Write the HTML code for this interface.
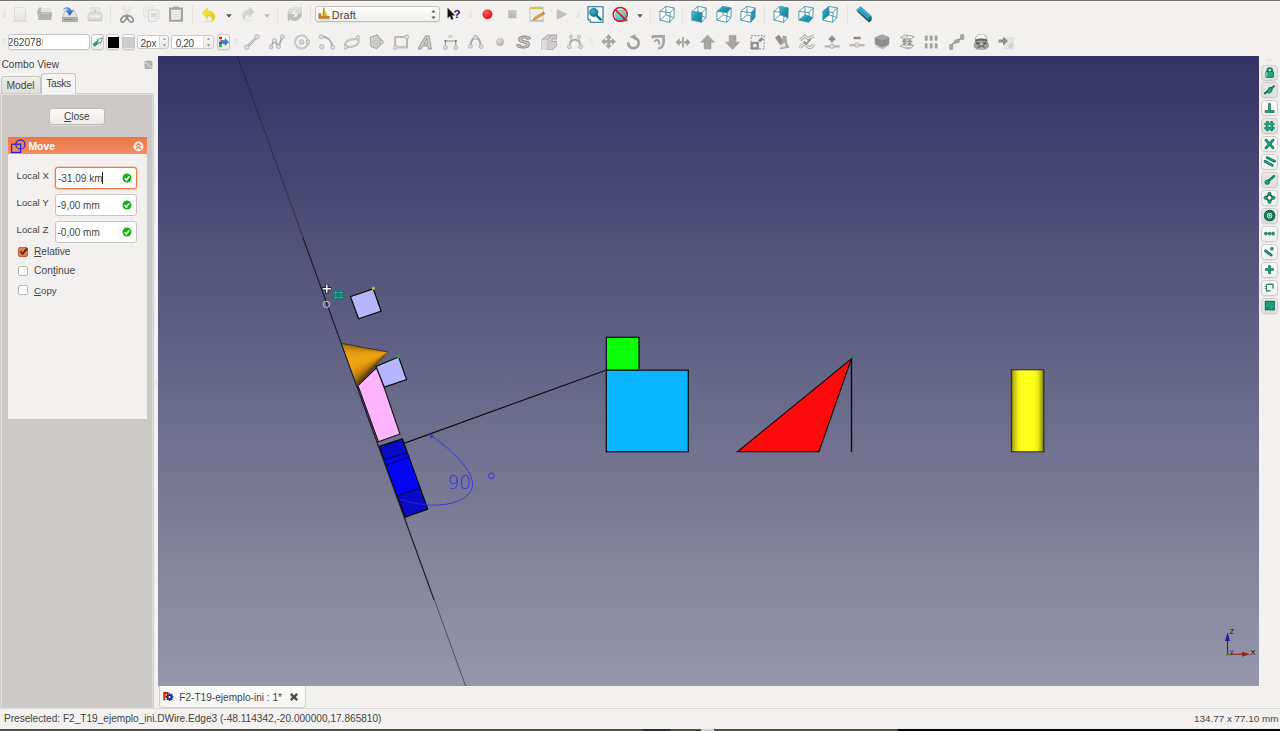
<!DOCTYPE html>
<html><head><meta charset="utf-8"><title>FreeCAD</title>
<style>
*{box-sizing:border-box;margin:0;padding:0}
html,body{width:1280px;height:731px;overflow:hidden;background:#f2f1f0;font-family:"Liberation Sans","DejaVu Sans",sans-serif;font-size:10px;color:#45443f}
.abs{position:absolute}
#top{position:absolute;left:0;top:0;width:1280px;height:2px;background:linear-gradient(#72716d 0,#72716d 50%,#f9f9f8 50%)}
#bottom{position:absolute;left:0;top:729px;width:1280px;height:2px;background:linear-gradient(90deg,#4d4c45 0,#4d4c45 643px,#2b2b28 643px,#2b2b28 670px,#4d4c45 670px,#4d4c45 701px,#cfceca 701px,#cfceca 714px,#4d4c45 714px,#4d4c45 898px,#050505 898px)}
#view{position:absolute;left:158px;top:56px;width:1101px;height:630px;background:linear-gradient(#333365,#9797aa)}
#view svg{position:absolute;left:0;top:0}
/* left panel */
#combo-title{position:absolute;left:1.5px;top:59.1px;font-size:10.2px;line-height:12px;color:#45443f}
#tabpane{position:absolute;left:0;top:93px;width:154px;height:615px;background:linear-gradient(#cbc8c5,#cbcac8);border:1px solid #cfcecb;border-radius:0 3px 0 0;box-shadow:inset 1px 1px 0 #e4e3e1,inset -1px 0 0 #dddcda}
.tab{position:absolute;font-size:10.3px;text-align:center;border:1px solid #c4c3c0;border-bottom:none;border-radius:3px 3px 0 0}
#statusline{position:absolute;left:0;top:708px;width:1280px;height:1px;background:#dad9d6}
#status{position:absolute;left:4px;top:713.3px;font-size:10.1px;line-height:12px}
#dims{position:absolute;right:1.5px;top:713.1px;font-size:9.9px;line-height:12px}

.btn{border:1px solid #bcbbb8;border-radius:3px;background:linear-gradient(#fbfbfa,#eceae8);font-size:10px;box-shadow:0 1px 0 #dcdbd8}
.lbl{font-size:9.7px;line-height:13px;color:#45443f}
.inp{width:82px;height:22px;border:1px solid #c6c5c2;border-radius:3px;background:#fff;font-size:10px;line-height:22px;padding-left:2px;color:#45443f}
.caret{display:inline-block;width:1px;height:12px;background:#222;vertical-align:-2px}
.cb{width:10px;height:10px;border:1px solid #b5b4b0;border-radius:2px;background:#fff}
</style></head><body>
<div id="top"></div>
<div id="view">
<svg width="1101" height="630" viewBox="158 56 1101 630">
<defs>
<linearGradient id="cone" x1="343" y1="341" x2="359" y2="388" gradientUnits="userSpaceOnUse">
<stop offset="0" stop-color="#b87e10"/><stop offset="0.3" stop-color="#e89c12"/><stop offset="0.5" stop-color="#f2a414"/><stop offset="0.72" stop-color="#c8860e"/><stop offset="1" stop-color="#4a3006"/>
</linearGradient>
<linearGradient id="cyl" x1="0" y1="0" x2="1" y2="0">
<stop offset="0" stop-color="#77770f"/><stop offset="0.07" stop-color="#b8b812"/><stop offset="0.2" stop-color="#eeee18"/><stop offset="0.32" stop-color="#ffff1c"/><stop offset="0.68" stop-color="#ffff1c"/><stop offset="0.82" stop-color="#eaea18"/><stop offset="0.93" stop-color="#adad12"/><stop offset="1" stop-color="#62620e"/>
</linearGradient>
</defs>
<!-- long construction line -->
<line x1="237.3" y1="56" x2="465.6" y2="686" stroke="#1a1a28" stroke-width="0.55"/>
<!-- line to green square -->
<line x1="404" y1="443.300" x2="606.500" y2="370" stroke="#101016" stroke-width="1.250"/>
<!-- upper small square -->
<polygon points="373.2,288.8 350.4,296.6 358.6,318.8 381.2,311.2" fill="#b6b6ff" stroke="#111" stroke-width="1.3"/>
<circle cx="373.4" cy="288.4" r="1.6" fill="#c8c81e"/>
<!-- pink -->
<polygon points="377.2,367 358,385.6 378.4,441.8 400,434" fill="#ffb4ff" stroke="#15151c" stroke-width="1.1"/>
<!-- second small square -->
<polygon points="398.7,357 375.9,366.3 384.3,387.2 406.6,379.6" fill="#b6b6ff" stroke="#111" stroke-width="1.3"/>
<circle cx="398.7" cy="356.7" r="1.6" fill="#1fae1f"/>
<!-- cone -->
<g><polygon points="341.80,343.30 387.7,352 343.37,347.61" fill="#9e6c0e"/><polygon points="342.59,345.45 387.7,352 344.16,349.76" fill="#b97f10"/><polygon points="343.37,347.61 387.7,352 344.94,351.92" fill="#c88911"/><polygon points="344.16,349.76 387.7,352 345.73,354.07" fill="#d89312"/><polygon points="344.94,351.92 387.7,352 346.51,356.23" fill="#e29a12"/><polygon points="345.73,354.07 387.7,352 347.30,358.38" fill="#e79d13"/><polygon points="346.51,356.23 387.7,352 348.08,360.54" fill="#eba013"/><polygon points="347.30,358.38 387.7,352 348.87,362.69" fill="#f0a314"/><polygon points="348.08,360.54 387.7,352 349.65,364.85" fill="#f1a414"/><polygon points="348.87,362.69 387.7,352 350.44,367.00" fill="#efa313"/><polygon points="349.65,364.85 387.7,352 351.22,369.16" fill="#eda213"/><polygon points="350.44,367.00 387.7,352 352.00,371.31" fill="#eba112"/><polygon points="351.22,369.16 387.7,352 352.79,373.47" fill="#e59c11"/><polygon points="352.00,371.31 387.7,352 353.57,375.62" fill="#db9410"/><polygon points="352.79,373.47 387.7,352 354.36,377.78" fill="#d18c0f"/><polygon points="353.57,375.62 387.7,352 355.14,379.94" fill="#c2810d"/><polygon points="354.36,377.78 387.7,352 355.93,382.09" fill="#ad730b"/><polygon points="355.14,379.94 387.7,352 356.71,384.25" fill="#986508"/><polygon points="355.93,382.09 387.7,352 357.50,386.40" fill="#795007"/><polygon points="356.71,384.25 387.7,352 357.50,386.40" fill="#5a3b06"/></g>
<line x1="341.8" y1="343.3" x2="387.7" y2="352" stroke="#2a1e08" stroke-width="0.7"/>
<!-- blue box -->
<polygon points="379.3,446.5 402.3,438.9 427.7,509.2 405.1,517.2" fill="#0a0ac8" stroke="#0a0a14" stroke-width="1.4"/>
<polygon points="384.4,460 407,452.7 419.5,488 397.5,495.8" fill="#0404f8"/>
<line x1="384.4" y1="460" x2="407" y2="452.7" stroke="#0a0a50" stroke-width="1.3"/>
<line x1="386" y1="465" x2="408.4" y2="457.5" stroke="#0a0a50" stroke-width="1.3"/>
<line x1="397.5" y1="495.8" x2="419.5" y2="488" stroke="#0a0a50" stroke-width="1.3"/>
<line x1="303" y1="238" x2="434" y2="600" stroke="#1a1a26" stroke-width="1"/>
<!-- arc -->
<path d="M430,435 C455,452 474,472 472.5,486 C470,502 440,512 400.5,499.5" fill="none" stroke="#2c2ce4" stroke-width="0.800"/>
<polygon points="429.300,434.300 433.500,435.600 431.300,438.600" fill="#2c2ce4"/>
<text x="447.500" y="488.700" font-family="'DejaVu Sans','Liberation Sans',sans-serif" font-weight="200" font-size="19.500" fill="#3030e0" textLength="23.400" lengthAdjust="spacingAndGlyphs">90</text>
<circle cx="491.300" cy="475.700" r="2.800" fill="none" stroke="#2c2ce4" stroke-width="1"/>
<!-- green, cyan squares -->
<rect x="606.3" y="337.3" width="32.7" height="33" fill="#0bff0b" stroke="#10141a" stroke-width="1.3"/>
<rect x="606.3" y="370.2" width="82" height="81.5" fill="#0bb4ff" stroke="#10141a" stroke-width="1.3"/>
<!-- red triangle -->
<polygon points="737.5,451.7 851.4,358.7 819,451.7" fill="#fa0c0c" stroke="#1a1014" stroke-width="1.2"/>
<line x1="851.5" y1="358.7" x2="851.5" y2="452" stroke="#0d0d12" stroke-width="1.4"/>
<!-- cylinder -->
<rect x="1011.3" y="369.8" width="32.6" height="82" fill="url(#cyl)" stroke="#22222a" stroke-width="1"/>
<!-- cursor & snap -->
<g>
<path d="M326.8,284 v9.4 M322.1,288.7 h9.4" stroke="#222" stroke-width="3.2" fill="none"/>
<path d="M326.8,284.6 v8.2 M322.7,288.7 h8.2" stroke="#fff" stroke-width="1.4" fill="none"/>
<circle cx="326.5" cy="304.4" r="3.1" fill="none" stroke="#e4e4ec" stroke-width="0.85"/>
<path d="M335.8,291 v8 M340.8,291 v8 M333.6,292.6 h9.4 M333.6,297.4 h9.4" stroke="#0f6a50" stroke-width="2.6" fill="none" stroke-linecap="round"/>
<path d="M335.8,291 v8 M340.8,291 v8 M333.6,292.6 h9.4 M333.6,297.4 h9.4" stroke="#16b08a" stroke-width="1.3" fill="none" stroke-linecap="round"/>
</g>
<!-- axis cross -->
<g>
<line x1="1227.5" y1="654.3" x2="1227.5" y2="640" stroke="#2a2a9a" stroke-width="1.2"/>
<polygon points="1227.5,632 1225,641 1230,641" fill="#1f1f9c"/>
<line x1="1227.5" y1="654.3" x2="1243" y2="654.3" stroke="#9a2a2a" stroke-width="1.2"/>
<polygon points="1250,654.3 1242,651.8 1242,656.8" fill="#a02020"/>
<circle cx="1227.5" cy="654.6" r="1.3" fill="#1fa01f"/>
<text x="1229.4" y="633.6" font-family="'Liberation Sans',sans-serif" font-size="7.5" fill="#111">Z</text>
<text x="1250.5" y="655" font-family="'Liberation Sans',sans-serif" font-size="7.5" fill="#111">X</text>
<text x="1229.4" y="655" font-family="'Liberation Sans',sans-serif" font-size="6.5" fill="#222">Y</text>
</g>
</svg>
</div>
<!--TB0--><svg class="abs" style="left:3px;top:11px" width="5" height="8" viewBox="0 0 5 8"><path d="M0.200,1.500h2.800M0.200,3.600h2.800M0.200,5.700h2.800" stroke="#d9d8d5" stroke-width="0.800"/></svg>
<svg class="abs" style="left:12px;top:6px" width="16" height="16" viewBox="0 0 16 16"><defs><linearGradient id="gnew" x1="0" y1="0" x2="0" y2="1"><stop offset="0" stop-color="#f4f4f3"/><stop offset="1" stop-color="#e4e3e2"/></linearGradient></defs><path d="M2.5,1.5 h8.5 l2.5,2.5 v11 h-11 z" fill="url(#gnew)" stroke="#dad9d7" stroke-width="0.9"/><path d="M11,1.5 v2.5 h2.5" fill="#fafafa" stroke="#e2e1df" stroke-width="0.6"/><path d="M1.5,15.6 h13" stroke="#d9d8d6" stroke-width="0.8"/></svg>
<svg class="abs" style="left:37px;top:6px" width="16" height="16" viewBox="0 0 16 16"><path d="M1,3 l1,-1.6 h3 l1,1.2 h7.5 v6 h-13.5z" fill="#bdbcba"/><path d="M4,2.2 h9.5 v5 h-9.5z" fill="#e4e3e1"/><path d="M1.2,14 l-0.4,-9.5 h2 l0.6,1.8 h12 l-1.2,7.7 z" fill="#b2b1af"/><path d="M1.6,13.4 l1.4,-6 h12" fill="none" stroke="#c9c8c6" stroke-width="0.7"/></svg>
<svg class="abs" style="left:62px;top:6px" width="16" height="16" viewBox="0 0 16 16"><defs><linearGradient id="gsv" x1="0" y1="0" x2="1" y2="1"><stop offset="0" stop-color="#9dbde2"/><stop offset="0.5" stop-color="#4a84c8"/><stop offset="1" stop-color="#2559a4"/></linearGradient></defs><path d="M0.400,11.400 l2.600,-7 h9.600 l2.600,7 v4.200 h-14.800z" fill="#e5e4e2" stroke="#b1b0ae" stroke-width="0.700"/><rect x="0.400" y="11.400" width="14.800" height="4.200" fill="#bab9b7" stroke="#a09f9d" stroke-width="0.700"/><path d="M2,13.500 h11.600" stroke="#8a8987" stroke-width="1.300"/><path d="M10.600,13.500 h3" stroke="#a9a8a6" stroke-width="1.300"/><path d="M0.800,4.600 c0.400,-3.400 4.200,-4.800 7,-2.600 c1.100,0.900 1.500,2 1.600,2.600 h2.400 l-4.100,5.400 l-4.300,-5.400 h2.400 c-0.300,-1.800 -2.400,-2.400 -5,0z" fill="url(#gsv)"/></svg>
<svg class="abs" style="left:87px;top:6px" width="16" height="16" viewBox="0 0 16 16"><rect x="3.5" y="1.5" width="9" height="6" fill="#e9e8e6" stroke="#d6d5d3" stroke-width="0.7"/><path d="M8,2.5 v3.4 M6.6,4.6 l1.4,1.5 l1.4,-1.5" stroke="#cbcac8" stroke-width="1" fill="none"/><path d="M1,8 l1.5,-1.5 h11 l1.5,1.5 v6.3 h-14z" fill="#dddcda" stroke="#cccbc9" stroke-width="0.7"/><rect x="2.2" y="9.2" width="11.6" height="2.2" fill="#f0efee"/><path d="M1,14.7 h14" stroke="#c4c3c1" stroke-width="1"/></svg>
<div class="abs" style="left:110px;top:5px;width:1px;height:18px;background:#e4e3e0"></div>
<svg class="abs" style="left:119px;top:6px" width="16" height="17" viewBox="0 0 16 17"><path d="M3.8,0.8 l5.600,10 M12.200,0.800 l-5.600,10" stroke="#d9d8d6" stroke-width="2.2" fill="none"/><path d="M3.8,0.800 l5.600,10 M12.200,0.800 l-5.600,10" stroke="#f4f3f2" stroke-width="0.9" fill="none"/><ellipse cx="4.600" cy="13" rx="3.500" ry="2.100" transform="rotate(-48 4.600 13)" fill="none" stroke="#8c8b89" stroke-width="1.500"/><ellipse cx="11.400" cy="13" rx="3.500" ry="2.100" transform="rotate(48 11.400 13)" fill="none" stroke="#8c8b89" stroke-width="1.500"/><circle cx="8" cy="9" r="1" fill="#8c8b89"/></svg>
<svg class="abs" style="left:143px;top:6px" width="17" height="16" viewBox="0 0 17 16"><rect x="0.8" y="0.8" width="9.5" height="10.5" fill="#ecebea" stroke="#dfdedc" stroke-width="0.7"/><path d="M5.5,4 h10.3 v8.5 l-3,3 h-7.3z" fill="#eeedec" stroke="#d3d2d0" stroke-width="0.8"/><rect x="8" y="7" width="5.5" height="4" fill="#d8d7d5"/><path d="M12.8,15.5 v-3 h3" fill="#f8f8f7" stroke="#d3d2d0" stroke-width="0.6"/></svg>
<svg class="abs" style="left:168px;top:6px" width="16" height="16" viewBox="0 0 16 16"><rect x="1.6" y="2" width="12.8" height="13.2" fill="#a9a8a6" stroke="#979694" stroke-width="0.8"/><rect x="3.3" y="3.6" width="9.4" height="10.2" fill="#ecebea"/><rect x="5.4" y="0.8" width="5.2" height="2.6" rx="0.8" fill="#b4b3b1" stroke="#979694" stroke-width="0.6"/><path d="M5,6.5 h6 M5,8.5 h6 M5,10.5 h4" stroke="#d9d8d6" stroke-width="0.9"/><path d="M12.7,11.4 l-2.4,2.4 h2.4z" fill="#c2c1bf"/></svg>
<div class="abs" style="left:192px;top:5px;width:1px;height:18px;background:#e4e3e0"></div>
<svg class="abs" style="left:201.4px;top:6.6px" width="16" height="16" viewBox="0 0 16 16"><defs><linearGradient id="gun" x1="0" y1="0" x2="1" y2="1"><stop offset="0" stop-color="#f6ec6a"/><stop offset="0.6" stop-color="#e9d414"/><stop offset="1" stop-color="#d6be0a"/></linearGradient></defs><ellipse cx="8" cy="14.3" rx="6" ry="1.3" fill="#e3e2df"/><path d="M1.2,5.6 l5.2,-4.8 v3 c4.5,0 7.6,2.4 7.6,6 c0,2.2 -1.8,3.9 -3.8,4.6 c1.2,-1.3 1.5,-2.6 0.6,-3.8 c-0.9,-1.2 -2.4,-1.6 -4.4,-1.5 v3z" fill="url(#gun)" stroke="#e0cc2a" stroke-width="0.5"/></svg>
<svg class="abs" style="left:225.8px;top:13.5px" width="6" height="4" viewBox="0 0 6 4"><path d="M0.2,0.3 h5.6 l-2.8,3.400 z" fill="#55544f"/></svg>
<svg class="abs" style="left:241px;top:6px" width="15" height="16" viewBox="0 0 15 16"><ellipse cx="7" cy="14.200" rx="5.600" ry="1.200" fill="#eae9e7"/><path d="M13.300,5.800 l-5.200,-5 v3.200 c-4,0.200 -6.800,2.600 -6.800,5.800 c0,2 1.400,3.400 3,4 c-0.800,-1.200 -0.800,-2.600 0,-3.600 c0.800,-1 2.200,-1.400 3.800,-1.400 v2.800z" fill="#d6d5d3" stroke="#d0cfcd" stroke-width="0.400"/><path d="M8.400,1.600 l4,4 l-4,4.400" fill="#cbcac8" opacity="0.600"/></svg>
<svg class="abs" style="left:264.4px;top:13.5px" width="6" height="4" viewBox="0 0 6 4"><path d="M0.2,0.3 h5.6 l-2.8,3.400 z" fill="#bab9b6"/></svg>
<div class="abs" style="left:277px;top:5px;width:1px;height:18px;background:#e4e3e0"></div>
<svg class="abs" style="left:286.5px;top:5.4px" width="16" height="17" viewBox="0 0 16 17"><path d="M0.800,8.400 A7,7 0 0 1 12.200,3.200 L14.300,1.200 L14.700,8 L8,7.600 L9.900,5.600 A3.300,3.300 0 0 0 4.600,8.400 Z" fill="#dad9d7" stroke="#c4c3c1" stroke-width="0.500"/><path d="M0.800,8.400 A7,7 0 0 1 12.200,3.200 L14.300,1.200 L14.700,8 L8,7.600 L9.900,5.600 A3.300,3.300 0 0 0 4.600,8.400 Z" transform="rotate(180 7.750 8.600)" fill="#bfbebc" stroke="#b3b2b0" stroke-width="0.500"/><path d="M2.200,6.400 A6,6 0 0 1 11,3.600" stroke="#f0efee" stroke-width="1" fill="none"/></svg>
<div class="abs" style="left:310px;top:5px;width:1px;height:18px;background:#e4e3e0"></div>
<div class="abs" style="left:315px;top:6px;width:125px;height:16px;border:1px solid #c1c0bd;border-radius:3px;background:linear-gradient(#fdfdfc,#efeeec);box-shadow:0 1px 0 #e4e3e0"></div>
<svg class="abs" style="left:318px;top:7px" width="12" height="14" viewBox="0 0 12 14"><path d="M6,0.8 l3.4,8 h-3.4z" fill="#cfc23a"/><path d="M6,0.8 l-2.6,8 h2.6z" fill="#e4d860"/><path d="M5.6,0.5 v9" stroke="#6b5a1a" stroke-width="0.6"/><path d="M0.8,6.6 h1.8 v2.6 h8.6 v2.2 h-10.4z" fill="#d98712" stroke="#9a5c08" stroke-width="0.5"/><path d="M1.6,13 h9.6" stroke="#c4c3c0" stroke-width="0.8"/></svg>
<div class="abs" style="left:331.800px;top:7.700px;font-size:10.800px;letter-spacing:0.150px;line-height:14px;color:#45443f">Draft</div>
<svg class="abs" style="left:431px;top:9px" width="5" height="11" viewBox="0 0 5 11"><path d="M0.4,3.6 l2.1,-2.6 l2.1,2.6z M0.4,7.4 l2.1,2.6 l2.1,-2.6z" fill="#5a5956"/></svg>
<svg class="abs" style="left:447px;top:7px" width="13" height="14" viewBox="0 0 13 14"><path d="M0.8,1.2 v9.6 l2.2,-2 l1.5,3.6 l1.6,-0.7 l-1.5,-3.5 h3z" fill="#111" stroke="#000" stroke-width="0.4"/><text x="6.6" y="10.6" font-family="Liberation Sans,sans-serif" font-weight="bold" font-size="11.5" fill="#12128a">?</text></svg>
<svg class="abs" style="left:469px;top:11px" width="5" height="8" viewBox="0 0 5 8"><path d="M0.200,1.500h2.800M0.200,3.600h2.800M0.200,5.700h2.800" stroke="#d9d8d5" stroke-width="0.800"/></svg>
<svg class="abs" style="left:482px;top:9px" width="11" height="11" viewBox="0 0 11 11"><defs><radialGradient id="grec" cx="0.4" cy="0.35" r="0.7"><stop offset="0" stop-color="#ff5a5a"/><stop offset="1" stop-color="#e00a16"/></radialGradient></defs><circle cx="5.5" cy="5.3" r="4.9" fill="url(#grec)"/></svg>
<svg class="abs" style="left:508px;top:10px" width="9" height="9" viewBox="0 0 9 9"><rect x="0.3" y="0.3" width="8" height="8" fill="#bbbab8"/><rect x="0.3" y="0.3" width="8" height="3.4" fill="#c6c5c3"/></svg>
<svg class="abs" style="left:529px;top:6px" width="17" height="16" viewBox="0 0 17 16"><rect x="1" y="1.2" width="13" height="13" fill="#f4f3f1" stroke="#b9b8b5" stroke-width="0.8"/><rect x="1" y="1" width="13" height="2.2" fill="#d9c15a"/><path d="M0.5,15 h14.5" stroke="#b5b4b1" stroke-width="1.2"/><path d="M3,6 h8 M3,8.5 h6" stroke="#dcdbd8" stroke-width="0.7"/><path d="M5.2,11.6 l8.6,-5 l1.2,1.8 l-8.6,5 l-2.3,0.4z" fill="#e8a63a" stroke="#a8651a" stroke-width="0.5"/><path d="M13.8,6.6 l1.2,1.8 l1,-0.7 l-1.1,-1.7z" fill="#d65a5a"/></svg>
<svg class="abs" style="left:556px;top:9px" width="12" height="11" viewBox="0 0 12 11"><path d="M1,0.6 l10,4.7 l-10,4.9z" fill="#c3c2c0" stroke="#b3b2b0" stroke-width="0.5"/></svg>
<svg class="abs" style="left:577px;top:11px" width="5" height="8" viewBox="0 0 5 8"><path d="M0.200,1.500h2.800M0.200,3.600h2.800M0.200,5.700h2.800" stroke="#d9d8d5" stroke-width="0.800"/></svg>
<svg class="abs" style="left:587px;top:6px" width="17" height="17" viewBox="0 0 17 17"><path d="M1,0.8 h15 v15.4 h-12.4 l-2.6,-2.6z" fill="#fdfdfd" stroke="#1a6e86" stroke-width="1.1"/><path d="M1,13.6 h2.6 v2.6" fill="#e8eef0" stroke="#1a6e86" stroke-width="0.7"/><defs><radialGradient id="gzm" cx="0.4" cy="0.35" r="0.7"><stop offset="0" stop-color="#3fb0cc"/><stop offset="1" stop-color="#0f6f90"/></radialGradient></defs><circle cx="6.8" cy="6.4" r="4.2" fill="url(#gzm)" stroke="#0d5c78" stroke-width="0.6"/><path d="M9.8,9.6 l4,4" stroke="#0f6f90" stroke-width="2.4" stroke-linecap="round"/></svg>
<svg class="abs" style="left:612px;top:6px" width="17" height="17" viewBox="0 0 17 17"><defs><radialGradient id="gds" cx="0.4" cy="0.35" r="0.7"><stop offset="0" stop-color="#8fe6ea"/><stop offset="1" stop-color="#2fb4c4"/></radialGradient></defs><ellipse cx="11" cy="14.2" rx="5" ry="1.4" fill="#55534f" opacity="0.7"/><circle cx="8.6" cy="9" r="5.6" fill="url(#gds)"/><path d="M13.6,2.2 l-5.5,6.2" stroke="#e6b13a" stroke-width="1.6"/><circle cx="8.2" cy="8.4" r="7" fill="none" stroke="#d4141e" stroke-width="1.5"/><path d="M3.2,3.6 l10,9.8" stroke="#d4141e" stroke-width="1.5"/></svg>
<svg class="abs" style="left:637px;top:13.5px" width="6" height="4" viewBox="0 0 6 4"><path d="M0.2,0.3 h5.6 l-2.8,3.400 z" fill="#5a5955"/></svg>
<div class="abs" style="left:650px;top:5px;width:1px;height:18px;background:#e4e3e0"></div>
<svg class="abs" width="0" height="0"><defs><linearGradient id="gcube" x1="0" y1="0" x2="1" y2="1"><stop offset="0" stop-color="#4cc0e0"/><stop offset="0.5" stop-color="#1c93b2"/><stop offset="1" stop-color="#11809e"/></linearGradient></defs></svg>
<svg class="abs" style="left:658.5px;top:2px" width="17" height="22" viewBox="0 0 17 22"><polygon points="6.8,4.4 15.2,5.9 14.9,15.6 10.6,20.3 0.9,18.1 0.9,9.4" fill="#fbfcfc"/><path d="M0.9,9.4 L11.2,10.6 L10.6,20.3 L0.9,18.1z M6.8,4.4 L15.2,5.9 L14.9,15.6 L7.1,12.8z M0.9,9.4 L6.8,4.4 M11.2,10.6 L15.2,5.9 M10.6,20.3 L14.9,15.6 M0.9,18.1 L7.1,12.8" fill="none" stroke="#3a8ea2" stroke-width="0.85" stroke-linejoin="round"/></svg>
<div class="abs" style="left:682px;top:5px;width:1px;height:18px;background:#e4e3e0"></div>
<svg class="abs" style="left:690.8px;top:2px" width="17" height="22" viewBox="0 0 17 22"><polygon points="6.8,4.4 15.2,5.9 14.9,15.6 10.6,20.3 0.9,18.1 0.9,9.4" fill="#fbfcfc"/><polygon points="0.9,9.4 11.2,10.6 10.6,20.3 0.9,18.1" fill="url(#gcube)"/><path d="M0.9,9.4 L11.2,10.6 L10.6,20.3 L0.9,18.1z M6.8,4.4 L15.2,5.9 L14.9,15.6 L7.1,12.8z M0.9,9.4 L6.8,4.4 M11.2,10.6 L15.2,5.9 M10.6,20.3 L14.9,15.6 M0.9,18.1 L7.1,12.8" fill="none" stroke="#3a8ea2" stroke-width="0.85" stroke-linejoin="round"/></svg>
<svg class="abs" style="left:715.6px;top:2px" width="17" height="22" viewBox="0 0 17 22"><polygon points="6.8,4.4 15.2,5.9 14.9,15.6 10.6,20.3 0.9,18.1 0.9,9.4" fill="#fbfcfc"/><polygon points="0.9,9.4 11.2,10.6 15.2,5.9 6.8,4.4" fill="url(#gcube)"/><path d="M0.9,9.4 L11.2,10.6 L10.6,20.3 L0.9,18.1z M6.8,4.4 L15.2,5.9 L14.9,15.6 L7.1,12.8z M0.9,9.4 L6.8,4.4 M11.2,10.6 L15.2,5.9 M10.6,20.3 L14.9,15.6 M0.9,18.1 L7.1,12.8" fill="none" stroke="#3a8ea2" stroke-width="0.85" stroke-linejoin="round"/></svg>
<svg class="abs" style="left:740.4px;top:2px" width="17" height="22" viewBox="0 0 17 22"><polygon points="6.8,4.4 15.2,5.9 14.9,15.6 10.6,20.3 0.9,18.1 0.9,9.4" fill="#fbfcfc"/><polygon points="11.2,10.6 15.2,5.9 14.9,15.6 10.6,20.3" fill="url(#gcube)"/><path d="M0.9,9.4 L11.2,10.6 L10.6,20.3 L0.9,18.1z M6.8,4.4 L15.2,5.9 L14.9,15.6 L7.1,12.8z M0.9,9.4 L6.8,4.4 M11.2,10.6 L15.2,5.9 M10.6,20.3 L14.9,15.6 M0.9,18.1 L7.1,12.8" fill="none" stroke="#3a8ea2" stroke-width="0.85" stroke-linejoin="round"/></svg>
<div class="abs" style="left:764px;top:5px;width:1px;height:18px;background:#e4e3e0"></div>
<svg class="abs" style="left:772.8px;top:2px" width="17" height="22" viewBox="0 0 17 22"><polygon points="6.8,4.4 15.2,5.9 14.9,15.6 10.6,20.3 0.9,18.1 0.9,9.4" fill="#fbfcfc"/><polygon points="6.8,4.4 15.2,5.9 14.9,15.6 7.1,12.8" fill="url(#gcube)"/><path d="M0.9,9.4 L11.2,10.6 L10.6,20.3 L0.9,18.1z M6.8,4.4 L15.2,5.9 L14.9,15.6 L7.1,12.8z M0.9,9.4 L6.8,4.4 M11.2,10.6 L15.2,5.9 M10.6,20.3 L14.9,15.6 M0.9,18.1 L7.1,12.8" fill="none" stroke="#3a8ea2" stroke-width="0.85" stroke-linejoin="round"/></svg>
<svg class="abs" style="left:797.6px;top:2px" width="17" height="22" viewBox="0 0 17 22"><polygon points="6.8,4.4 15.2,5.9 14.9,15.6 10.6,20.3 0.9,18.1 0.9,9.4" fill="#fbfcfc"/><polygon points="0.9,18.1 10.6,20.3 14.9,15.6 7.1,12.8" fill="url(#gcube)"/><path d="M0.9,9.4 L11.2,10.6 L10.6,20.3 L0.9,18.1z M6.8,4.4 L15.2,5.9 L14.9,15.6 L7.1,12.8z M0.9,9.4 L6.8,4.4 M11.2,10.6 L15.2,5.9 M10.6,20.3 L14.9,15.6 M0.9,18.1 L7.1,12.8" fill="none" stroke="#3a8ea2" stroke-width="0.85" stroke-linejoin="round"/></svg>
<svg class="abs" style="left:822.4px;top:2px" width="17" height="22" viewBox="0 0 17 22"><polygon points="6.8,4.4 15.2,5.9 14.9,15.6 10.6,20.3 0.9,18.1 0.9,9.4" fill="#fbfcfc"/><polygon points="0.9,9.4 6.8,4.4 7.1,12.8 0.9,18.1" fill="url(#gcube)"/><path d="M0.9,9.4 L11.2,10.6 L10.6,20.3 L0.9,18.1z M6.8,4.4 L15.2,5.9 L14.9,15.6 L7.1,12.8z M0.9,9.4 L6.8,4.4 M11.2,10.6 L15.2,5.9 M10.6,20.3 L14.9,15.6 M0.9,18.1 L7.1,12.8" fill="none" stroke="#3a8ea2" stroke-width="0.85" stroke-linejoin="round"/></svg>
<div class="abs" style="left:847px;top:5px;width:1px;height:18px;background:#e4e3e0"></div>
<svg class="abs" style="left:855px;top:5px" width="18" height="18" viewBox="0 0 18 18"><path d="M2,6.6 l3.6,-3.6 l11,9 l-0.2,3.4 l-2.4,2z" fill="#3c4448"/><path d="M1.6,5 l3.8,-3.4 l10.800,9.400 l-3.6,3.2z" fill="#2aa0be" stroke="#1a6c82" stroke-width="0.5"/><path d="M2.6,4.800 l2.600,-2.300 l9.800,8.600" fill="none" stroke="#5cc6e0" stroke-width="0.9"/><path d="M12.600,14.200 l3.600,-3.200 l0.400,3 l-2.600,2.600z" fill="#14708a"/></svg>
<svg class="abs" style="left:3px;top:38px" width="5" height="8" viewBox="0 0 5 8"><path d="M0.200,1.500h2.800M0.200,3.600h2.800M0.200,5.700h2.800" stroke="#d9d8d5" stroke-width="0.800"/></svg>
<div class="abs" style="left:8px;top:34px;width:82px;height:16px;border:1px solid #c6c5c2;border-radius:3px;background:linear-gradient(#f9f9f8,#fff 40%);overflow:hidden;font-size:10.1px;line-height:14px;color:#45443f;box-shadow:0 1px 0 #e6e5e2"><span style="position:absolute;left:-1.400px;top:0.900px;white-space:nowrap">262078<span style="display:inline-block;width:1.2px;overflow:hidden;vertical-align:top;margin-left:0.6px;color:#7a6a5a">l</span></span></div>
<div class="abs" style="left:91px;top:34px;width:13px;height:16px;border:1px solid #c8c7c4;border-radius:3px;background:linear-gradient(#fbfbfa,#ecebe9);box-shadow:0 1px 0 #e2e1de"></div>
<svg class="abs" style="left:92px;top:37px" width="11" height="10" viewBox="0 0 11 10"><path d="M1,7.2 l4.6,-3.6 l1.6,2 l-4.6,3.6z" fill="#1aa08c" stroke="#0c5c50" stroke-width="0.6"/><path d="M5.2,2.6 l5.2,-1.8 l-1.6,5.6 l-1.4,-1.2 l-1.6,1.2 l-1,-1.4 l1.6,-1.2z" fill="#d8ece8" stroke="#2a7468" stroke-width="0.6"/></svg>
<div class="abs" style="left:106px;top:34px;width:13px;height:16px;border:1px solid #c8c7c4;border-radius:3px;background:linear-gradient(#fbfbfa,#ecebe9);box-shadow:0 1px 0 #e2e1de"></div>
<div class="abs" style="left:108px;top:36.5px;width:10.5px;height:11px;background:#000"></div>
<div class="abs" style="left:121.5px;top:34px;width:13px;height:16px;border:1px solid #c8c7c4;border-radius:3px;background:linear-gradient(#fbfbfa,#ecebe9);box-shadow:0 1px 0 #e2e1de"></div>
<div class="abs" style="left:123px;top:36.5px;width:10.5px;height:11px;background:#cccccc"></div>
<div class="abs" style="left:137px;top:35px;width:31.5px;height:14px;border:1px solid #c9c8c5;border-radius:3px;background:linear-gradient(#f7f6f5,#e9e8e6);overflow:hidden"><div style="position:absolute;left:0;top:0;width:21.5px;height:13px;background:#fff;border-right:1px solid #d9d8d5"></div><span style="position:absolute;left:2.6px;top:0.900px;font-size:10px;letter-spacing:-0.15px;line-height:14px;color:#45443f">2px</span></div>
<svg class="abs" style="left:161.5px;top:37px" width="5" height="10" viewBox="0 0 5 10"><path d="M0.9,2.600 l1.600,-1.700 l1.600,1.700z M0.900,7.600 l1.600,1.700 l1.600,-1.700z" fill="#6d6c69"/></svg>
<div class="abs" style="left:171px;top:35px;width:42.5px;height:14px;border:1px solid #c9c8c5;border-radius:3px;background:linear-gradient(#f7f6f5,#e9e8e6);overflow:hidden"><div style="position:absolute;left:0;top:0;width:32px;height:13px;background:#fff;border-right:1px solid #d9d8d5"></div><span style="position:absolute;left:3.8px;top:0.900px;font-size:10px;letter-spacing:-0.4px;line-height:14px;color:#45443f">0,20</span></div>
<svg class="abs" style="left:206.25px;top:37px" width="5" height="10" viewBox="0 0 5 10"><path d="M0.9,2.600 l1.600,-1.700 l1.600,1.700z M0.900,7.600 l1.600,1.700 l1.600,-1.700z" fill="#6d6c69"/></svg>
<div class="abs" style="left:216.5px;top:34px;width:13px;height:16px;border:1px solid #c8c7c4;border-radius:3px;background:linear-gradient(#fbfbfa,#ecebe9);box-shadow:0 1px 0 #e2e1de"></div>
<svg class="abs" style="left:218px;top:36px" width="11" height="12" viewBox="0 0 11 12"><rect x="1" y="0.8" width="3" height="2.6" fill="#e02020"/><rect x="1" y="3.4" width="3" height="2.6" fill="#e8d020"/><rect x="1" y="6" width="3" height="2.6" fill="#2050d0"/><rect x="1" y="8.6" width="3" height="2.6" fill="#20c030"/><path d="M3,4.6 h4 v-2 l3.6,3.4 l-3.6,3.4 v-2 h-4z" fill="#3f7fd6" stroke="#2256a8" stroke-width="0.5"/></svg>
<svg class="abs" style="left:234px;top:38px" width="5" height="8" viewBox="0 0 5 8"><path d="M0.200,1.500h2.800M0.200,3.600h2.800M0.200,5.700h2.800" stroke="#d9d8d5" stroke-width="0.800"/></svg>
<svg class="abs" style="left:244px;top:34px" width="16" height="16" viewBox="0 0 16 16"><path d="M3,13 L13,3" stroke="#b0afad" stroke-width="2.6"/><path d="M3,13 L13,3" stroke="#dedddb" stroke-width="1"/><circle cx="2.8" cy="13.2" r="2.35" fill="#dcdbd9" stroke="#a9a8a6" stroke-width="0.7"/><circle cx="13" cy="2.8" r="2.35" fill="#dcdbd9" stroke="#a9a8a6" stroke-width="0.7"/></svg>
<svg class="abs" style="left:269px;top:34px" width="16" height="16" viewBox="0 0 16 16"><path d="M2,12.6 L5.4,6.6 L9.6,12.4 L13.4,3" stroke="#b0afad" stroke-width="2" fill="none"/><circle cx="2" cy="12.8" r="2.05" fill="#dcdbd9" stroke="#a9a8a6" stroke-width="0.7"/><circle cx="5.4" cy="6.6" r="2.05" fill="#dcdbd9" stroke="#a9a8a6" stroke-width="0.7"/><circle cx="9.6" cy="12.6" r="2.05" fill="#dcdbd9" stroke="#a9a8a6" stroke-width="0.7"/><circle cx="13.4" cy="2.8" r="2.05" fill="#dcdbd9" stroke="#a9a8a6" stroke-width="0.7"/></svg>
<svg class="abs" style="left:294px;top:34px" width="16" height="16" viewBox="0 0 16 16"><circle cx="7.6" cy="8" r="6.6" fill="none" stroke="#b5b4b2" stroke-width="1.8"/><circle cx="7.6" cy="8" r="6.6" fill="none" stroke="#e4e3e1" stroke-width="0.6"/><circle cx="7.6" cy="8" r="2.25" fill="#dcdbd9" stroke="#a9a8a6" stroke-width="0.7"/><circle cx="14" cy="8" r="2.05" fill="#dcdbd9" stroke="#a9a8a6" stroke-width="0.7"/></svg>
<svg class="abs" style="left:319px;top:34px" width="16" height="16" viewBox="0 0 16 16"><path d="M2.4,2.6 C9,3 13,7.6 13.8,13.4" stroke="#b0afad" stroke-width="2" fill="none"/><circle cx="2.4" cy="2.6" r="2.05" fill="#dcdbd9" stroke="#a9a8a6" stroke-width="0.7"/><circle cx="13.8" cy="13.4" r="2.05" fill="#dcdbd9" stroke="#a9a8a6" stroke-width="0.7"/><circle cx="2.8" cy="12.8" r="2.25" fill="#dcdbd9" stroke="#a9a8a6" stroke-width="0.7"/></svg>
<svg class="abs" style="left:344px;top:34px" width="16" height="16" viewBox="0 0 16 16"><ellipse cx="8" cy="9" rx="7" ry="3.6" transform="rotate(-14 8 9)" fill="none" stroke="#b0afad" stroke-width="1.9"/><ellipse cx="8" cy="9" rx="7" ry="3.6" transform="rotate(-14 8 9)" fill="none" stroke="#e4e3e1" stroke-width="0.6"/><circle cx="14.2" cy="3.6" r="2.05" fill="#dcdbd9" stroke="#a9a8a6" stroke-width="0.7"/><circle cx="1.6" cy="13" r="2.05" fill="#dcdbd9" stroke="#a9a8a6" stroke-width="0.7"/></svg>
<svg class="abs" style="left:369px;top:34px" width="16" height="16" viewBox="0 0 16 16"><path d="M1.4,3.6 L8,1 L14,8 L7.6,14.6 L2,12.4z" fill="#dcdbd9" stroke="#a9a8a6" stroke-width="1.2"/><path d="M4,5.4 L8,3.8 L11.4,8 L7.4,12 L4.2,10.6z" fill="none" stroke="#b5b4b2" stroke-width="0.8"/><circle cx="7" cy="8" r="1.9500000000000002" fill="#dcdbd9" stroke="#a9a8a6" stroke-width="0.7"/><circle cx="12.6" cy="8" r="1.75" fill="#dcdbd9" stroke="#a9a8a6" stroke-width="0.7"/></svg>
<svg class="abs" style="left:393px;top:34px" width="16" height="16" viewBox="0 0 16 16"><rect x="2.2" y="3" width="11.8" height="10.4" fill="none" stroke="#a9a8a6" stroke-width="1.9"/><rect x="2.2" y="3" width="11.8" height="10.4" fill="none" stroke="#dedddb" stroke-width="0.5"/><circle cx="13.8" cy="3" r="2.15" fill="#dcdbd9" stroke="#a9a8a6" stroke-width="0.7"/><circle cx="2.2" cy="13.4" r="2.15" fill="#dcdbd9" stroke="#a9a8a6" stroke-width="0.7"/></svg>
<svg class="abs" style="left:418px;top:34px" width="16" height="16" viewBox="0 0 16 16"><text x="0.2" y="14.6" font-family="Liberation Sans,sans-serif" font-style="italic" font-weight="bold" font-size="17.5" fill="#d6d5d3" stroke="#9e9d9b" stroke-width="0.9" textLength="14.5" lengthAdjust="spacingAndGlyphs">A</text></svg>
<svg class="abs" style="left:443px;top:34px" width="16" height="16" viewBox="0 0 16 16"><path d="M2.4,13.6 V6 M12.8,13.6 V6 M2.4,7 H12.8" stroke="#8e8d8b" stroke-width="1.1" fill="none"/><path d="M5,4.4 L7,1 L8,4 L10,1.4" stroke="#b9b8b6" stroke-width="0.8" fill="none"/><circle cx="2.4" cy="13.6" r="2.05" fill="#dcdbd9" stroke="#a9a8a6" stroke-width="0.7"/><circle cx="12.8" cy="13.6" r="2.05" fill="#dcdbd9" stroke="#a9a8a6" stroke-width="0.7"/><circle cx="2.4" cy="7" r="1" fill="#777"/><circle cx="12.8" cy="7" r="1" fill="#777"/></svg>
<svg class="abs" style="left:468px;top:34px" width="16" height="16" viewBox="0 0 16 16"><path d="M2.400,12 C3,5.600 5.800,3.400 7.600,3.400 C9.400,3.400 12.200,5.600 13,12.400" stroke="#a9a8a6" stroke-width="2" fill="none"/><circle cx="2.4" cy="12.2" r="2.05" fill="#dcdbd9" stroke="#a9a8a6" stroke-width="0.7"/><circle cx="7.6" cy="3.4" r="2.05" fill="#dcdbd9" stroke="#a9a8a6" stroke-width="0.7"/><circle cx="13" cy="12.6" r="2.05" fill="#dcdbd9" stroke="#a9a8a6" stroke-width="0.7"/></svg>
<svg class="abs" style="left:492px;top:34px" width="16" height="16" viewBox="0 0 16 16"><defs><radialGradient id="gpt" cx="0.4" cy="0.35" r="0.7"><stop offset="0" stop-color="#e2e1df"/><stop offset="1" stop-color="#a9a8a6"/></radialGradient></defs><circle cx="8" cy="8" r="3.9" fill="url(#gpt)"/></svg>
<svg class="abs" style="left:516px;top:34px" width="16" height="16" viewBox="0 0 16 16"><text x="0.6" y="14.2" font-family="Liberation Sans,sans-serif" font-style="italic" font-weight="bold" font-size="17" fill="#cfcecc" stroke="#8f8e8c" stroke-width="0.9" textLength="14" lengthAdjust="spacingAndGlyphs">S</text></svg>
<svg class="abs" style="left:541px;top:34px" width="16" height="16" viewBox="0 0 16 16"><path d="M1,5.6 L6.6,1 H16 V5 H11 V7.4 H16 V11.4 L11,16 H1z" fill="#cfcecc" stroke="#9a9997" stroke-width="0.9"/><path d="M1,5.6 H6.6 V16 M6.6,5.6 L11,1.4" stroke="#9a9997" stroke-width="0.8" fill="none"/><path d="M1,5.6 H6.6 V16 H1z" fill="#dddcda"/></svg>
<svg class="abs" style="left:567px;top:34px" width="16" height="16" viewBox="0 0 16 16"><path d="M2.4,12.4 L4,3 M13.6,12.4 L12,3" stroke="#bbbab8" stroke-width="0.9"/><path d="M2.4,12.4 C3.4,3.4 12.6,3.4 13.6,12.4" stroke="#a9a8a6" stroke-width="1.6" fill="none"/><circle cx="2.4" cy="12.6" r="2.05" fill="#dcdbd9" stroke="#a9a8a6" stroke-width="0.7"/><circle cx="13.6" cy="12.6" r="2.05" fill="#dcdbd9" stroke="#a9a8a6" stroke-width="0.7"/><circle cx="4" cy="2.6" r="1.65" fill="#dcdbd9" stroke="#a9a8a6" stroke-width="0.7"/><circle cx="12" cy="2.6" r="1.65" fill="#dcdbd9" stroke="#a9a8a6" stroke-width="0.7"/></svg>
<svg class="abs" style="left:590px;top:38px" width="5" height="8" viewBox="0 0 5 8"><path d="M0.200,1.500h2.800M0.200,3.600h2.800M0.200,5.700h2.800" stroke="#d9d8d5" stroke-width="0.800"/></svg>
<svg class="abs" style="left:601px;top:34px" width="16" height="16" viewBox="0 0 16 16"><path d="M7.6,0.6 l2.8,3.2 h-1.8 v2.8 h2.8 v-1.8 l3.2,2.8 l-3.2,2.8 v-1.8 h-2.8 v2.8 h1.8 l-2.8,3.2 l-2.8,-3.2 h1.8 v-2.8 h-2.8 v1.8 l-3.2,-2.8 l3.2,-2.8 v1.8 h2.8 v-2.8 h-1.8z" fill="#a8a7a5" stroke="#8f8e8c" stroke-width="0.5"/></svg>
<svg class="abs" style="left:626px;top:34px" width="16" height="16" viewBox="0 0 16 16"><path d="M2.300,8.400 A5.200,5.200 0 1 0 8.800,3.900" fill="none" stroke="#a2a19f" stroke-width="2.800"/><path d="M3.600,2.700 L9.600,0.300 L10,6.300z" fill="#a2a19f"/></svg>
<svg class="abs" style="left:650px;top:34px" width="16" height="16" viewBox="0 0 16 16"><path d="M1.800,4 L3.400,2.400 H13.600 V8 C13.600,12 11.200,14.300 8.200,14.500" fill="none" stroke="#a3a2a0" stroke-width="2.600"/><path d="M4.400,7.800 C5.600,5 9.600,5 9.200,10.600" fill="none" stroke="#a3a2a0" stroke-width="2"/></svg>
<svg class="abs" style="left:675px;top:34px" width="16" height="16" viewBox="0 0 16 16"><path d="M7.900,3 V13.600" stroke="#a09f9d" stroke-width="1.700"/><path d="M0.600,8.200 L4.600,4.200 V6.900 H6.600 V9.500 H4.600 V12.200z M15.400,8.200 L11.400,4.200 V6.900 H9.300 V9.500 H11.400 V12.200z" fill="#a09f9d"/></svg>
<svg class="abs" style="left:700px;top:34px" width="16" height="16" viewBox="0 0 16 16"><path d="M7.6,1 l7,7.2 h-3.6 v6.8 h-6.8 v-6.8 h-3.6z" fill="#a6a5a3" stroke="#949391" stroke-width="0.5"/></svg>
<svg class="abs" style="left:725px;top:34px" width="16" height="16" viewBox="0 0 16 16"><path d="M7.6,15.4 l7,-7.2 h-3.6 v-6.8 h-6.8 v6.8 h-3.6z" fill="#a6a5a3" stroke="#949391" stroke-width="0.5"/></svg>
<svg class="abs" style="left:750px;top:34px" width="16" height="16" viewBox="0 0 16 16"><rect x="1" y="1.600" width="13.200" height="13.200" fill="none" stroke="#9a9997" stroke-width="1.200" stroke-dasharray="1.800 1.500"/><rect x="1.800" y="9" width="5.900" height="5.400" fill="#f0efed" stroke="#8f8e8c" stroke-width="2.200"/><path d="M9,7.400 l3.600,-3.200" stroke="#8f8e8c" stroke-width="3"/></svg>
<svg class="abs" style="left:774px;top:34px" width="16" height="16" viewBox="0 0 16 16"><path d="M1,3.6 l4,-2.8 l5.4,7.6 l-4,2.8z" fill="#8f8e8c"/><path d="M8.6,1.4 l3.8,0.6 l1,8 l2.4,3.6 l-10,2 l1.6,-4 z" fill="#a9a8a6"/><path d="M6.4,11.2 l4,-2.8 l1.6,4 l-4.4,1z" fill="#e4e3e1"/></svg>
<svg class="abs" style="left:799px;top:34px" width="16" height="16" viewBox="0 0 16 16"><path d="M1.200,6 L6,2 L8.800,4.600 L15,1.800" stroke="#a3a2a0" stroke-width="3" fill="none" stroke-linejoin="miter"/><path d="M1.200,6 L6,2 L8.800,4.600 L15,1.800" stroke="#ecebe9" stroke-width="1.300" fill="none"/><path d="M1.200,13.800 C3.600,9 6.400,10 8.400,12.400 C10.400,14.600 13,13.600 15,10.400" stroke="#a3a2a0" stroke-width="3" fill="none"/><path d="M1.200,13.800 C3.600,9 6.400,10 8.400,12.400 C10.400,14.600 13,13.600 15,10.400" stroke="#ecebe9" stroke-width="1.300" fill="none"/><path d="M4.800,7.400 l2.400,2.600 l4.400,-4.800" stroke="#8a8987" stroke-width="1.700" fill="none"/></svg>
<svg class="abs" style="left:824px;top:34px" width="16" height="16" viewBox="0 0 16 16"><path d="M0.600,12.400 h15.200" stroke="#b9b8b6" stroke-width="2.300"/><circle cx="8" cy="12.2" r="2.35" fill="#dcdbd9" stroke="#a9a8a6" stroke-width="0.7"/><path d="M8,1.700 v6.600 M4.700,5 h6.600" stroke="#8d8c8a" stroke-width="2.500"/></svg>
<svg class="abs" style="left:849px;top:34px" width="16" height="16" viewBox="0 0 16 16"><path d="M0.400,11.200 h15.200" stroke="#b9b8b6" stroke-width="2.300"/><circle cx="8" cy="11" r="2.35" fill="#dcdbd9" stroke="#a9a8a6" stroke-width="0.7"/><path d="M4.600,4 h7" stroke="#8d8c8a" stroke-width="2.500"/></svg>
<svg class="abs" style="left:874px;top:34px" width="16" height="16" viewBox="0 0 16 16"><path d="M1.400,12 l7,-2.600 l7,2.400 l-7,3.600z" fill="#c2c1bf"/><path d="M0.800,3.600 l7.400,-3.200 l7,2.800 v7 l-7,3 l-7.400,-3z" fill="#8d8c8a"/><path d="M0.800,3.600 l7.400,-3.200 l7,2.800 l-7,3.200z" fill="#a7a6a4"/><path d="M8.200,6.400 v6.800" stroke="#9c9b99" stroke-width="0.600"/></svg>
<svg class="abs" style="left:899px;top:34px" width="16" height="16" viewBox="0 0 16 16"><path d="M1,12 l5.400,-3 l8.600,2.400 l-5.400,3.800z" fill="#e9e8e6" stroke="#a09f9d" stroke-width="0.900"/><path d="M1.200,3.600 l5.400,-2.800 l8.600,2 l-5.400,3.200z" fill="#e9e8e6" stroke="#a09f9d" stroke-width="0.900"/><ellipse cx="10.600" cy="3.200" rx="3" ry="1.700" fill="#f2f1f0" stroke="#a09f9d" stroke-width="0.800"/><ellipse cx="10.600" cy="12.200" rx="3" ry="1.700" fill="#f2f1f0" stroke="#a09f9d" stroke-width="0.800"/><path d="M4.400,11 v-3.600 h-1.600 l2.600,-3 l2.600,3 h-1.600 v3.600z M9.800,11.600 v-3.600 h-1.600 l2.600,-3 l2.600,3 h-1.600 v3.600z" fill="#9c9b99" stroke="#8a8987" stroke-width="0.400"/></svg>
<svg class="abs" style="left:924px;top:34px" width="16" height="16" viewBox="0 0 16 16"><rect x="0.8" y="1.6" width="2.8" height="5.2" rx="0.6" fill="#a3a2a0"/><rect x="0.8" y="9.2" width="2.8" height="5.2" rx="0.6" fill="#a3a2a0"/><rect x="5.8" y="1.6" width="2.8" height="5.2" rx="0.6" fill="#a3a2a0"/><rect x="5.8" y="9.2" width="2.8" height="5.2" rx="0.6" fill="#a3a2a0"/><rect x="10.8" y="1.6" width="2.8" height="5.2" rx="0.6" fill="#a3a2a0"/><rect x="10.8" y="9.2" width="2.8" height="5.2" rx="0.6" fill="#a3a2a0"/></svg>
<svg class="abs" style="left:949px;top:34px" width="16" height="16" viewBox="0 0 16 16"><path d="M2.200,13 C2.600,8 6,9.600 7.200,7.600 C8.600,5 12,6 13.400,3" stroke="#9a9997" stroke-width="1.400" fill="none"/><rect x="0.600" y="10.400" width="3.200" height="5" rx="0.500" fill="#a9a8a6" stroke="#918f8d" stroke-width="0.600"/><rect x="5.600" y="5.800" width="4.600" height="3" rx="0.500" fill="#a9a8a6" stroke="#918f8d" stroke-width="0.600" transform="rotate(-20 8 7.300)"/><rect x="11.600" y="0.600" width="3.200" height="5" rx="0.500" fill="#a9a8a6" stroke="#918f8d" stroke-width="0.600"/></svg>
<svg class="abs" style="left:973px;top:34px" width="16" height="16" viewBox="0 0 16 16"><path d="M8.300,0.300 c4.400,0 6,2.800 5.800,6.600 l1.700,5.400 c-1.400,2.400 -4.600,3.500 -7.500,3.500 c-2.900,0 -6.100,-1.100 -7.500,-3.500 l1.700,-5.400 c-0.200,-3.800 1.400,-6.600 5.800,-6.600z" fill="#a3a2a0" stroke="#8a8987" stroke-width="0.700"/><path d="M8.300,0.600 c3.600,0 5.200,2 5.400,4.600 c-3.400,-1.200 -7.400,-1.200 -10.800,0 c0.200,-2.600 1.800,-4.600 5.400,-4.600z" fill="#fafaf9"/><path d="M2.700,5.600 c3.600,-1.300 7.600,-1.300 11.200,0 l0.200,1.600 c-3.600,-1 -8,-1 -11.600,0z" fill="#5f5e5c"/><path d="M3.200,8 l3.600,0.700 l-0.700,2 l-3,-0.600z M13.400,8 l-3.600,0.700 l0.700,2 l3,-0.600z" fill="#5a5957"/><path d="M5,13.600 c1.600,-2.600 5,-2.600 6.600,0" stroke="#62615f" stroke-width="1.100" fill="none"/><path d="M7.300,9.400 h2 l0.500,1.800 h-3z" fill="#c9c8c6"/><path d="M5.600,15 h5.400" stroke="#d2d1cf" stroke-width="0.900"/></svg>
<svg class="abs" style="left:998px;top:34px" width="16" height="16" viewBox="0 0 16 16"><rect x="6.400" y="4" width="9" height="10.800" fill="#e6e5e3" stroke="#cfcecc" stroke-width="0.6"/><path d="M9.400,13.600 l5,-6 v6z" fill="#cfcecc"/><path d="M0.600,5.400 h4.400 v-3 l5,4.600 l-5,4.600 v-3 h-4.400z" fill="#8f8e8c"/></svg>
<!--TB1-->
<!--SN0--><svg class="abs" style="left:1266px;top:58px" width="8" height="4" viewBox="0 0 8 4"><path d="M1.5,0.5v2.6M3.6,0.5v2.6M5.700,0.5v2.6" stroke="#d4d3d0" stroke-width="0.8"/></svg>
<div class="abs" style="left:1261px;top:64.50px;width:16.5px;height:16px;border:1px solid #cdccc9;border-radius:3.5px;background:linear-gradient(#e9e8e6,#dfdedc);box-shadow:0 1px 0 #e6e5e2"></div>
<svg class="abs" style="left:1261px;top:64.5px" width="16.5" height="16" viewBox="0 0 16.5 16"><path d="M6.5,6.6 v-1.300 a2.200,2.200 0 0 1 4.400,0 v1.300" fill="none" stroke="#0b5c46" stroke-width="1.900"/><path d="M6.5,6.600 v-1.300 a2.200,2.200 0 0 1 4.400,0 v1.300" fill="none" stroke="#17a580" stroke-width="0.900"/><rect x="4.900" y="6.400" width="7.600" height="6" rx="0.600" fill="#17a580" stroke="#0b5c46" stroke-width="0.700"/><path d="M5.800,7 v4.800" stroke="#9fe6d0" stroke-width="0.900"/></svg>
<div class="abs" style="left:1261px;top:82.45px;width:16.5px;height:16px;border:1px solid #cdccc9;border-radius:3.5px;background:linear-gradient(#e9e8e6,#dfdedc);box-shadow:0 1px 0 #e6e5e2"></div>
<svg class="abs" style="left:1261px;top:82.45px" width="16.5" height="16" viewBox="0 0 16.5 16"><path d="M4,11.400 L12.800,4.400" stroke="#0b5c46" stroke-width="2" fill="none" stroke-linecap="round" /><path d="M4,11.400 L12.800,4.400" stroke="#17a580" stroke-width="1" fill="none" stroke-linecap="round" /><polygon points="5.800,9.400 8.400,5.200 11.200,6.400 10.800,9.600 8,11.600" fill="#17a580" stroke="#0b5c46" stroke-width="0.700"/></svg>
<div class="abs" style="left:1261px;top:100.40px;width:16.5px;height:16px;border:1px solid #cdccc9;border-radius:3.5px;background:linear-gradient(#fbfbfa,#f0efed);box-shadow:0 1px 0 #e6e5e2"></div>
<svg class="abs" style="left:1261px;top:100.4px" width="16.5" height="16" viewBox="0 0 16.5 16"><path d="M8.500,3.200 V11 M3.800,11.500 H13.400" stroke="#0b5c46" stroke-width="2.400" fill="none"/><path d="M8.500,3.600 V11 M4.200,11.500 H13" stroke="#17a580" stroke-width="1.300" fill="none"/></svg>
<div class="abs" style="left:1261px;top:118.35px;width:16.5px;height:16px;border:1px solid #cdccc9;border-radius:3.5px;background:linear-gradient(#e9e8e6,#dfdedc);box-shadow:0 1px 0 #e6e5e2"></div>
<svg class="abs" style="left:1261px;top:118.35px" width="16.5" height="16" viewBox="0 0 16.5 16"><path d="M6.400,4.400 V11.800 M10.600,4.400 V11.800 M4.700,6 H12.300 M4.700,10.200 H12.300" stroke="#0b5c46" stroke-width="2.7" fill="none" stroke-linecap="round" /><path d="M6.400,4.400 V11.800 M10.600,4.400 V11.800 M4.700,6 H12.300 M4.700,10.200 H12.300" stroke="#17a580" stroke-width="1.8" fill="none" stroke-linecap="round" /><rect x="7.500" y="7.100" width="2" height="1.800" fill="#f4f4f2"/></svg>
<div class="abs" style="left:1261px;top:136.30px;width:16.5px;height:16px;border:1px solid #cdccc9;border-radius:3.5px;background:linear-gradient(#fbfbfa,#f0efed);box-shadow:0 1px 0 #e6e5e2"></div>
<svg class="abs" style="left:1261px;top:136.3px" width="16.5" height="16" viewBox="0 0 16.5 16"><path d="M5,4.200 L12,11.800 M12,4.200 L5,11.800" stroke="#0b5c46" stroke-width="2.7" fill="none" stroke-linecap="round" /><path d="M5,4.200 L12,11.800 M12,4.200 L5,11.800" stroke="#17a580" stroke-width="1.7" fill="none" stroke-linecap="round" /></svg>
<div class="abs" style="left:1261px;top:154.25px;width:16.5px;height:16px;border:1px solid #cdccc9;border-radius:3.5px;background:linear-gradient(#fbfbfa,#f0efed);box-shadow:0 1px 0 #e6e5e2"></div>
<svg class="abs" style="left:1261px;top:154.25px" width="16.5" height="16" viewBox="0 0 16.5 16"><path d="M6.300,3.600 L13.500,7.200 M4,7.300 L11.300,11.400" stroke="#0b5c46" stroke-width="2.7" fill="none" stroke-linecap="round" stroke-linecap="butt"/><path d="M6.300,3.600 L13.500,7.200 M4,7.300 L11.300,11.400" stroke="#17a580" stroke-width="1.5" fill="none" stroke-linecap="round" stroke-linecap="butt"/></svg>
<div class="abs" style="left:1261px;top:172.20px;width:16.5px;height:16px;border:1px solid #cdccc9;border-radius:3.5px;background:linear-gradient(#e9e8e6,#dfdedc);box-shadow:0 1px 0 #e6e5e2"></div>
<svg class="abs" style="left:1261px;top:172.2px" width="16.5" height="16" viewBox="0 0 16.5 16"><path d="M6.600,9.800 L13,4.200" stroke="#0b5c46" stroke-width="2.5" fill="none" stroke-linecap="round" /><path d="M6.600,9.800 L13,4.200" stroke="#17a580" stroke-width="1.3" fill="none" stroke-linecap="round" /><circle cx="6.200" cy="10.200" r="2.300" fill="#17a580" stroke="#0b5c46" stroke-width="0.700"/></svg>
<div class="abs" style="left:1261px;top:190.15px;width:16.5px;height:16px;border:1px solid #cdccc9;border-radius:3.5px;background:linear-gradient(#fbfbfa,#f0efed);box-shadow:0 1px 0 #e6e5e2"></div>
<svg class="abs" style="left:1261px;top:190.15px" width="16.5" height="16" viewBox="0 0 16.5 16"><polygon points="8.500,4 12.200,7.800 8.500,11.600 4.800,7.800" fill="#f8f8f6" stroke="#0b5c46" stroke-width="1.600"/><circle cx="8.5" cy="3.8" r="1.700" fill="#17a580" stroke="#0b5c46" stroke-width="0.600"/><circle cx="12.4" cy="7.8" r="1.700" fill="#17a580" stroke="#0b5c46" stroke-width="0.600"/><circle cx="8.5" cy="11.8" r="1.700" fill="#17a580" stroke="#0b5c46" stroke-width="0.600"/><circle cx="4.6" cy="7.8" r="1.700" fill="#17a580" stroke="#0b5c46" stroke-width="0.600"/></svg>
<div class="abs" style="left:1261px;top:208.10px;width:16.5px;height:16px;border:1px solid #cdccc9;border-radius:3.5px;background:linear-gradient(#e9e8e6,#dfdedc);box-shadow:0 1px 0 #e6e5e2"></div>
<svg class="abs" style="left:1261px;top:208.1px" width="16.5" height="16" viewBox="0 0 16.5 16"><circle cx="8.600" cy="7.600" r="4.300" fill="#d8efe8" stroke="#0b5c46" stroke-width="2.900"/><circle cx="8.600" cy="7.600" r="4.300" fill="none" stroke="#0e7a5e" stroke-width="1.800"/><circle cx="8.600" cy="7.600" r="1.500" fill="none" stroke="#0b5c46" stroke-width="0.800"/></svg>
<div class="abs" style="left:1261px;top:226.05px;width:16.5px;height:16px;border:1px solid #cdccc9;border-radius:3.5px;background:linear-gradient(#fbfbfa,#f0efed);box-shadow:0 1px 0 #e6e5e2"></div>
<svg class="abs" style="left:1261px;top:226.05px" width="16.5" height="16" viewBox="0 0 16.5 16"><circle cx="4.9" cy="7.600" r="1.500" fill="#17a580" stroke="#0b5c46" stroke-width="0.600"/><circle cx="8.5" cy="7.600" r="1.500" fill="#17a580" stroke="#0b5c46" stroke-width="0.600"/><circle cx="12.1" cy="7.600" r="1.500" fill="#17a580" stroke="#0b5c46" stroke-width="0.600"/></svg>
<div class="abs" style="left:1261px;top:244.00px;width:16.5px;height:16px;border:1px solid #cdccc9;border-radius:3.5px;background:linear-gradient(#fbfbfa,#f0efed);box-shadow:0 1px 0 #e6e5e2"></div>
<svg class="abs" style="left:1261px;top:244.0px" width="16.5" height="16" viewBox="0 0 16.5 16"><path d="M4.600,6.800 L10.200,11" stroke="#0b5c46" stroke-width="2.7" fill="none" stroke-linecap="round" stroke-linecap="butt"/><path d="M4.600,6.800 L10.200,11" stroke="#17a580" stroke-width="1.5" fill="none" stroke-linecap="round" stroke-linecap="butt"/><circle cx="10.900" cy="4.700" r="1.500" fill="#17a580" stroke="#0b5c46" stroke-width="0.600"/></svg>
<div class="abs" style="left:1261px;top:261.95px;width:16.5px;height:16px;border:1px solid #cdccc9;border-radius:3.5px;background:linear-gradient(#fbfbfa,#f0efed);box-shadow:0 1px 0 #e6e5e2"></div>
<svg class="abs" style="left:1261px;top:261.95px" width="16.5" height="16" viewBox="0 0 16.5 16"><path d="M8.500,4.300 V10.900 M5.200,7.600 H11.800" stroke="#0b5c46" stroke-width="2.5" fill="none" stroke-linecap="round" /><path d="M8.500,4.300 V10.900 M5.200,7.600 H11.800" stroke="#17a580" stroke-width="1.5" fill="none" stroke-linecap="round" /></svg>
<div class="abs" style="left:1261px;top:279.90px;width:16.5px;height:16px;border:1px solid #cdccc9;border-radius:3.5px;background:linear-gradient(#fbfbfa,#f0efed);box-shadow:0 1px 0 #e6e5e2"></div>
<svg class="abs" style="left:1261px;top:279.9px" width="16.5" height="16" viewBox="0 0 16.5 16"><path d="M5.500,4.400 h6.500 v4.200 M5.500,4.400 v6.500 h4.200" fill="none" stroke="#2a7a66" stroke-width="1.300"/><path d="M3.800,6.500 h1.500 M3.800,8.500 h1.500 M8,2.800 v1 M10,2.800 v1" stroke="#3a8a76" stroke-width="0.800"/><rect x="6.500" y="5.600" width="4.300" height="4" fill="#f4f4f2"/></svg>
<div class="abs" style="left:1261px;top:297.85px;width:16.5px;height:16px;border:1px solid #cdccc9;border-radius:3.5px;background:linear-gradient(#e9e8e6,#dfdedc);box-shadow:0 1px 0 #e6e5e2"></div>
<svg class="abs" style="left:1261px;top:297.85px" width="16.5" height="16" viewBox="0 0 16.5 16"><rect x="4.300" y="3.300" width="9" height="8.600" fill="#17a580" stroke="#0b5c46" stroke-width="0.900"/><circle cx="6.700" cy="9.700" r="0.900" fill="none" stroke="#0b5c46" stroke-width="0.600"/></svg>
<!--SN1-->
<div id="combo-title">Combo View</div>
<div class="tab" style="left:0.5px;top:75.5px;width:40px;height:18.5px;line-height:17px;background:linear-gradient(#efeeec,#dedddb)">Model</div>
<div id="tabpane"></div>
<div class="tab" style="left:41px;top:73px;width:35px;height:21px;line-height:19px;letter-spacing:-0.350px;background:#f6f5f4">Tasks</div>

<!-- combo float button -->
<svg class="abs" style="left:143.5px;top:59.5px" width="9" height="10" viewBox="0 0 9 10"><rect x="0.600" y="0.700" width="7.800" height="8.300" rx="1.600" fill="#aeadaa"/><path d="M1.800,2.300 h2.300 l-2.300,2.300z M7.200,7.400 h-2.300 l2.300,-2.300z" fill="#f4f3f2"/><path d="M2.600,6.600 l3.800,-3.600" stroke="#e6e5e3" stroke-width="0.900"/><circle cx="4" cy="5.300" r="0.800" fill="#f4f3f2"/></svg>
<!-- Close button -->
<div class="abs btn" style="left:48.5px;top:108px;width:56.5px;height:16.5px;line-height:16.2px;text-align:center"><u>C</u>lose</div>
<!-- Move header -->
<div class="abs" style="left:7.5px;top:137px;width:139px;height:17.3px;background:linear-gradient(#ee7544,#f38e66);"></div>
<svg class="abs" style="left:9px;top:137px" width="18" height="17" viewBox="0 0 18 17"><circle cx="11.4" cy="7.4" r="4.6" fill="none" stroke="#2222d8" stroke-width="1.2"/><rect x="2.6" y="7.2" width="9" height="8.2" fill="none" stroke="#2222d8" stroke-width="1.2"/></svg>
<div class="abs" style="left:28.4px;top:140px;font-weight:bold;color:#fff;font-size:10.4px;line-height:13px">Move</div>
<svg class="abs" style="left:133px;top:140.5px" width="11" height="11" viewBox="0 0 11 11"><circle cx="5.5" cy="5.5" r="5" fill="#fbe9e1"/><path d="M3,5 L5.5,2.8 L8,5 M3,8 L5.5,5.8 L8,8" stroke="#ee7a4c" stroke-width="1.2" fill="none"/></svg>
<!-- Move content -->
<div class="abs" style="left:7.5px;top:154px;width:139px;height:264.5px;background:#f2f1f0"></div>
<div class="abs lbl" style="left:16.6px;top:168.5px">Local X</div>
<div class="abs lbl" style="left:16.6px;top:195.5px">Local Y</div>
<div class="abs lbl" style="left:16.6px;top:222.5px">Local Z</div>
<div class="abs inp" style="left:55px;top:167px;border-color:#ee7a4c;box-shadow:0 0 0 0.5px #f3a585">-31,09 km<span class="caret"></span></div>
<div class="abs inp" style="left:54.5px;top:194px;width:82.5px">-9,00 mm</div>
<div class="abs inp" style="left:54.5px;top:221px;width:82.5px">-0,00 mm</div>
<svg class="abs" style="left:122px;top:173px" width="10" height="10" viewBox="0 0 10 10"><circle cx="5" cy="5" r="4.5" fill="#12b312"/><path d="M2.6,5.2 L4.4,7 L7.4,3.2" stroke="#fff" stroke-width="1.5" fill="none"/></svg>
<svg class="abs" style="left:122px;top:200px" width="10" height="10" viewBox="0 0 10 10"><circle cx="5" cy="5" r="4.5" fill="#12b312"/><path d="M2.6,5.2 L4.4,7 L7.4,3.2" stroke="#fff" stroke-width="1.5" fill="none"/></svg>
<svg class="abs" style="left:122px;top:227px" width="10" height="10" viewBox="0 0 10 10"><circle cx="5" cy="5" r="4.5" fill="#12b312"/><path d="M2.6,5.2 L4.4,7 L7.4,3.2" stroke="#fff" stroke-width="1.5" fill="none"/></svg>
<!-- checkboxes -->
<div class="abs cb" style="left:18px;top:247px;background:#ee7a4c;border-color:#c4603a"></div>
<svg class="abs" style="left:18px;top:246px" width="11" height="11" viewBox="0 0 11 11"><path d="M2.4,5.4 L4.6,8 L9,2.4" stroke="#4a2a1c" stroke-width="1.7" fill="none"/></svg>
<div class="abs lbl" style="left:34px;top:245px;font-size:10.1px"><u>R</u>elative</div>
<div class="abs cb" style="left:18px;top:266px"></div>
<div class="abs lbl" style="left:34px;top:264px;font-size:10.3px">Con<u>t</u>inue</div>
<div class="abs cb" style="left:18px;top:285px"></div>
<div class="abs lbl" style="left:34px;top:284px"><u>C</u>opy</div>
<!-- document tab -->
<div class="abs" style="left:158.5px;top:686px;width:147.5px;height:22px;background:linear-gradient(#fcfcfb,#f7f6f5);border:1px solid #d2d1ce;border-top:none;border-radius:0 0 3.5px 3.5px"></div>
<svg class="abs" style="left:162px;top:690px" width="13" height="13" viewBox="0 0 13 13"><defs><linearGradient id="gfc" x1="0" y1="0" x2="0" y2="1"><stop offset="0" stop-color="#e0140a"/><stop offset="1" stop-color="#f0500a"/></linearGradient></defs><path d="M1.200,1.900 h5.400 v2.100 h-3.200 v1.500 h2 v2 h-2 v3 h-2.200 z" fill="url(#gfc)"/><g fill="#14288e"><circle cx="7.600" cy="7.100" r="2.900"/><g stroke="#14288e" stroke-width="1.500"><path d="M7.600,3.300 v7.600 M3.800,7.100 h7.600 M4.900,4.400 l5.400,5.400 M10.300,4.400 l-5.400,5.400"/></g></g><circle cx="7.600" cy="7.100" r="1.100" fill="#fafaf9"/></svg>
<div class="abs" style="left:179.300px;top:691.200px;font-size:10.1px;line-height:13px;color:#45443f">F2-T19-ejemplo-ini : 1*</div>
<svg class="abs" style="left:289px;top:692px" width="10" height="10" viewBox="0 0 10 10"><path d="M1.8,1.8 L8.2,8.2 M8.2,1.8 L1.8,8.2" stroke="#4c4b47" stroke-width="2.4"/></svg>
<svg class="abs" style="left:154px;top:379px" width="4" height="7" viewBox="0 0 4 7"><path d="M0.500,1.400h2.600M0.500,3.400h2.600M0.500,5.300h2.600" stroke="#dfdedb" stroke-width="0.800"/></svg>
<div id="statusline"></div>
<div id="status">Preselected: F2_T19_ejemplo_ini.DWire.Edge3 (-48.114342,-20.000000,17.865810)</div>
<div id="dims">134.77 x 77.10 mm</div>
<div id="bottom"></div>
</body></html>
